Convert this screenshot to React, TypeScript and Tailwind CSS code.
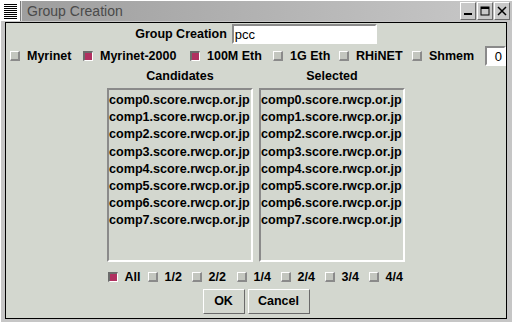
import React from "react";

const F = { fontFamily: '"Liberation Sans", Arial, sans-serif' } as const;

function Box({ on }: { on?: boolean }) {
  return on ? (
    <span className="inline-block w-[10px] h-[10px] shrink-0 border-t-2 border-l-2 border-b border-r border-t-[#6b6b6b] border-l-[#6b6b6b] border-b-white border-r-white bg-[#b03060]" />
  ) : (
    <span className="inline-block w-[10px] h-[10px] shrink-0 border-t border-l border-b-2 border-r-2 border-t-white border-l-white border-b-[#8a8a8a] border-r-[#8a8a8a] bg-[#c3c6bf]" />
  );
}

function Check({ label, on, w }: { label: string; on?: boolean; w: string }) {
  return (
    <div className={`flex items-center shrink-0 ${w}`}>
      <Box on={on} />
      <span className="ml-[7px] text-[12.5px] font-bold text-black leading-none whitespace-nowrap">{label}</span>
    </div>
  );
}

const hosts = Array.from({ length: 8 }, (_, i) => `comp${i}.score.rwcp.or.jp`);

function List() {
  return (
    <div className="w-[146px] h-[174px] border-2 border-t-[#8a8a8a] border-l-[#8a8a8a] border-b-white border-r-white bg-[#d3d7cf] pt-[2px] pl-[0px]">
      {hosts.map((h) => (
        <div key={h} className="text-[12.6px] font-bold leading-[17.2px] text-black whitespace-nowrap">
          {h}
        </div>
      ))}
    </div>
  );
}

export default function App() {
  return (
    <div style={F} className="w-[512px] h-[322px] bg-[#c6c6c6] flex flex-col overflow-hidden border-l border-t border-white">
      {/* title bar */}
      <div className="h-[20px] flex items-stretch shrink-0">
        <div className="w-[20px] h-[20px] bg-white flex flex-col justify-center gap-[1px] px-[3px] border-r border-[#7a7a7a]">
          {Array.from({ length: 8 }).map((_, i) => (
            <div key={i} className="h-[1px] bg-black" />
          ))}
        </div>
        <div className="flex-1 flex items-center pl-[5px] bg-gradient-to-r from-[#9e9e9e] to-[#c4c4c4] border-l border-[#d8d8d8]">
          <span className="text-[14px] text-[#4a4a4a] leading-none">Group Creation</span>
        </div>
        <div className="flex items-center gap-[1px] pr-[2px] bg-[#c4c4c4]">
          {["min", "max", "close"].map((k) => (
            <div key={k} className="w-[16px] h-[18px] bg-[#c8c8c8] border border-t-white border-l-white border-b-[#6a6a6a] border-r-[#6a6a6a] flex items-center justify-center">
              <svg width="10" height="10" viewBox="0 0 10 10">
                {k === "min" && <rect x="1" y="7" width="8" height="2" fill="black" />}
                {k === "max" && (
                  <>
                    <rect x="1" y="1" width="8" height="8" fill="none" stroke="black" />
                    <rect x="1" y="1" width="8" height="2" fill="black" />
                  </>
                )}
                {k === "close" && (
                  <path d="M1 1 L9 9 M9 1 L1 9" stroke="black" strokeWidth="1.5" />
                )}
              </svg>
            </div>
          ))}
        </div>
      </div>
      {/* content */}
      <div className="ml-[4px] mr-[5px] mt-[1px] h-[297px] border border-black bg-[#d3d7cf] flex flex-col">
        <div className="mt-[1px] h-[20px] flex items-center justify-center">
          <span className="text-[12.5px] font-bold text-black">Group Creation</span>
          <div className="ml-[5px] w-[145px] h-[20px] bg-white border-2 border-t-[#8a8a8a] border-l-[#8a8a8a] border-b-white border-r-white flex items-center pl-[1px]">
            <span className="text-[13px] text-black leading-none">pcc</span>
          </div>
        </div>
        <div className="mt-[2px] h-[20px] flex items-center pl-[4px]">
          <Check label="Myrinet" w="w-[73px]" />
          <Check label="Myrinet-2000" on w="w-[107px]" />
          <Check label="100M Eth" on w="w-[83px]" />
          <Check label="1G Eth" w="w-[66px]" />
          <Check label="RHiNET" w="w-[73px]" />
          <Check label="Shmem" w="w-[73px]" />
          <div className="w-[21px] h-[20px] bg-white border-2 border-t-[#8a8a8a] border-l-[#8a8a8a] border-b-white border-r-white flex items-center justify-end pr-[2px]">
            <span className="text-[13px] text-black leading-none">0</span>
          </div>
        </div>
        <div className="h-[20px] flex items-center justify-center gap-[6px]">
          <div className="w-[146px] text-center text-[12.5px] font-bold text-black">Candidates</div>
          <div className="w-[146px] text-center text-[12.5px] font-bold text-black">Selected</div>
        </div>
        <div className="mt-[2px] flex justify-center gap-[6px]">
          <List />
          <List />
        </div>
        <div className="mt-[5px] h-[20px] flex items-center justify-center">
          <Check label="All" on w="w-[40px]" />
          <Check label="1/2" w="w-[44px]" />
          <Check label="2/2" w="w-[45px]" />
          <Check label="1/4" w="w-[44px]" />
          <Check label="2/4" w="w-[44px]" />
          <Check label="3/4" w="w-[44px]" />
          <Check label="4/4" w="w-[36px]" />
        </div>
        <div className="mt-[2px] flex justify-center gap-[3px]">
          <div className="w-[42px] h-[25px] border border-t-white border-l-white border-b-[#6a6a6a] border-r-[#6a6a6a] flex items-center justify-center text-[12.5px] font-bold text-black">OK</div>
          <div className="w-[62px] h-[25px] border border-t-white border-l-white border-b-[#6a6a6a] border-r-[#6a6a6a] flex items-center justify-center text-[12.5px] font-bold text-black">Cancel</div>
        </div>
      </div>
    </div>
  );
}
